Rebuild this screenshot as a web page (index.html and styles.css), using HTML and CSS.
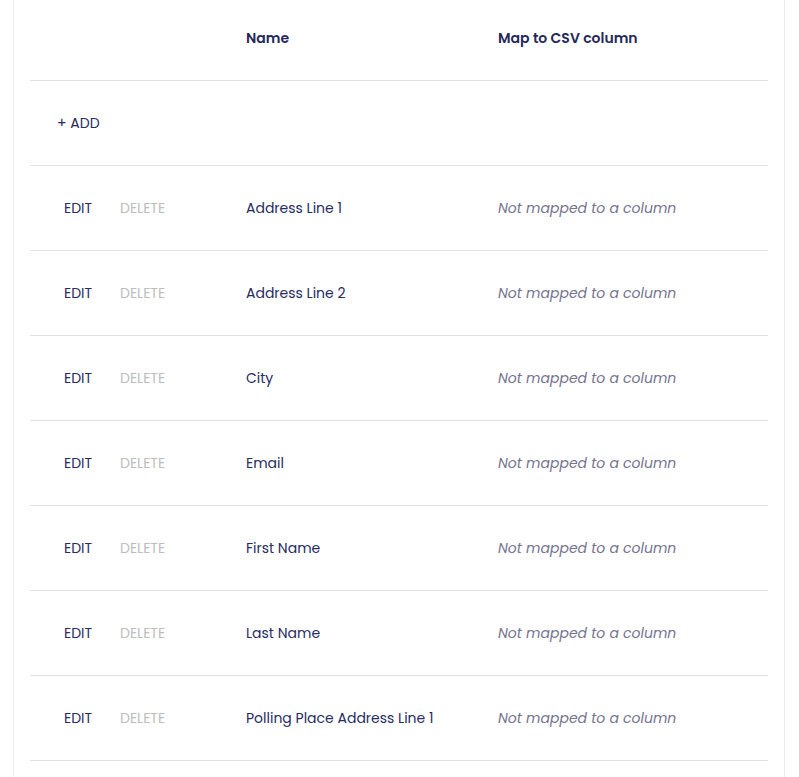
FILE: index.html
```html
<!DOCTYPE html>
<html>
<head>
<meta charset="utf-8">
<link rel="stylesheet" href="styles.css">
</head>
<body>
<div class="card">
  <div class="row head">
    <div class="c-actions"></div>
    <div class="c-name">Name</div>
    <div class="c-map">Map to CSV column</div>
  </div>
  <div class="row">
    <div class="c-add"><span class="add">+ ADD</span></div>
  </div>
  <div class="row">
    <div class="c-actions"><span class="edit">EDIT</span><span class="del">DELETE</span></div>
    <div class="c-name">Address Line 1</div>
    <div class="c-map nm">Not mapped to a column</div>
  </div>
  <div class="row">
    <div class="c-actions"><span class="edit">EDIT</span><span class="del">DELETE</span></div>
    <div class="c-name">Address Line 2</div>
    <div class="c-map nm">Not mapped to a column</div>
  </div>
  <div class="row">
    <div class="c-actions"><span class="edit">EDIT</span><span class="del">DELETE</span></div>
    <div class="c-name">City</div>
    <div class="c-map nm">Not mapped to a column</div>
  </div>
  <div class="row">
    <div class="c-actions"><span class="edit">EDIT</span><span class="del">DELETE</span></div>
    <div class="c-name">Email</div>
    <div class="c-map nm">Not mapped to a column</div>
  </div>
  <div class="row">
    <div class="c-actions"><span class="edit">EDIT</span><span class="del">DELETE</span></div>
    <div class="c-name">First Name</div>
    <div class="c-map nm">Not mapped to a column</div>
  </div>
  <div class="row">
    <div class="c-actions"><span class="edit">EDIT</span><span class="del">DELETE</span></div>
    <div class="c-name">Last Name</div>
    <div class="c-map nm">Not mapped to a column</div>
  </div>
  <div class="row">
    <div class="c-actions"><span class="edit">EDIT</span><span class="del">DELETE</span></div>
    <div class="c-name">Polling Place Address Line 1</div>
    <div class="c-map nm">Not mapped to a column</div>
  </div>
  <div class="row empty"></div>
</div>
</body>
</html>
```
FILE: styles.css
```css
html, body {
  margin: 0;
  padding: 0;
  background: #ffffff;
}
body {
  font-family: "Poppins", "Open Sans", "Noto Sans", sans-serif;
  font-size: 14px;
  color: #282c5f;
  padding: 0 14px 0 13px;
}
.card {
  width: 738px;
  border-left: 1px solid #ececec;
  border-right: 1px solid #ececec;
  padding: 0 16px;
}
.row {
  display: grid;
  grid-template-columns: 216px 252px 1fr;
  align-items: center;
  height: 84px;
  border-bottom: 1px solid #e2e2e2;
}
.row.empty {
  border-bottom: none;
}
.row.head {
  height: 76px;
  padding-bottom: 4px;
  font-weight: 600;
  color: #242959;
}
.c-add {
  grid-column: 1 / 4;
  padding-left: 27px;
}
.c-actions {
  display: flex;
  padding-left: 34px;
}
.edit {
  width: 56px;
}
.del {
  color: #bdbdbd;
}
.nm {
  font-style: italic;
  color: #75738f;
}
```
